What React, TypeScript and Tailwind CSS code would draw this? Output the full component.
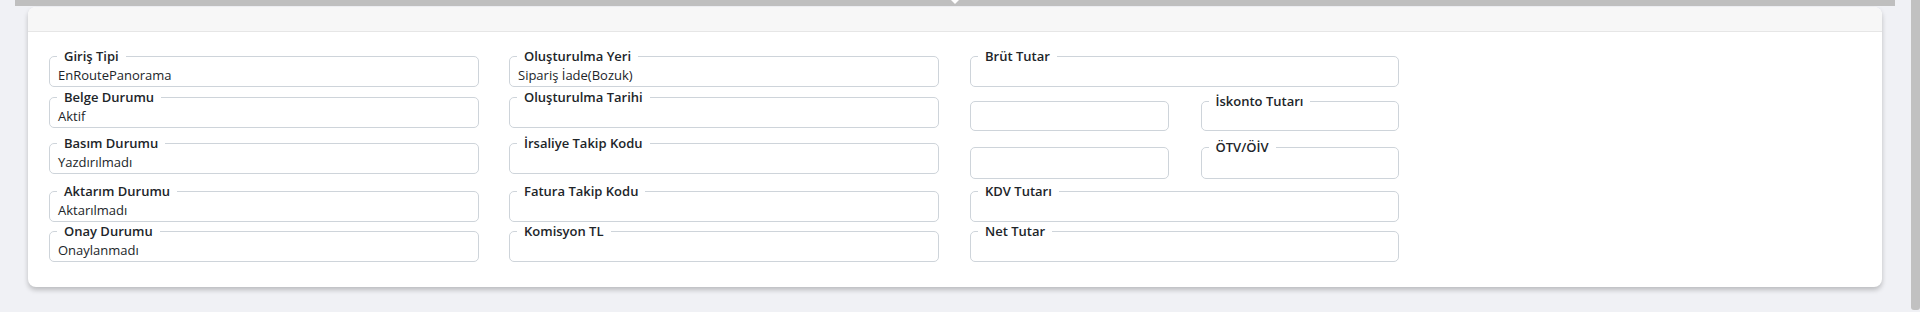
import React from "react";

type FieldProps = {
  label?: string;
  value?: string;
  className?: string;
  contentClass?: string;
};

function Field({ label, value, className = "", contentClass = "h-[22px] leading-[22px]" }: FieldProps) {
  return (
    <fieldset className={`min-w-0 rounded-[5px] border border-[#ced4da] px-2 ${className}`}>
      <legend className="ml-[-1px] px-[7px] text-[13px] font-semibold leading-4 text-[#212529]">{label}</legend>
      <div className={`text-[13px] text-[#212529] ${contentClass}`}>{value}</div>
    </fieldset>
  );
}

export default function App() {
  return (
    <div className="flex h-[312px] w-[1920px] overflow-hidden bg-[#f0f1f5] font-['Open_Sans',sans-serif] text-[#212529]">
      <div className="flex min-w-0 flex-1 flex-col">
        <div className="relative mx-[15px] h-[6px] shrink-0 bg-[#bfbfbf]">
          <svg className="absolute left-[936px] top-0" width="8" height="5" viewBox="0 0 8 5">
            <path d="M0 0 L8 0 L4 4 Z" fill="#ffffff" />
          </svg>
        </div>
        <div className="mx-[28px] mt-[1px] rounded-lg bg-white shadow-[0_3px_5px_rgba(0,0,0,0.22)]">
          <div className="h-[25px] rounded-t-lg border-b border-[#e6e6e6] bg-[#f7f7f7]" />
          <div className="grid grid-cols-[430px_430px_430px] gap-x-[30px] pb-[25px] pl-[21px] pt-[16px]">
            {/* Column 1 */}
            <div className="flex flex-col">
              <Field label="Giriş Tipi" value="EnRoutePanorama" />
              <Field label="Belge Durumu" value="Aktif" className="mt-[2px]" />
              <Field label="Basım Durumu" value="Yazdırılmadı" className="mt-[7px]" />
              <Field label="Aktarım Durumu" value="Aktarılmadı" className="mt-[9px]" />
              <Field label="Onay Durumu" value="Onaylanmadı" className="mt-[1px]" />
            </div>
            {/* Column 2 */}
            <div className="flex flex-col">
              <Field label="Oluşturulma Yeri" value="Sipariş İade(Bozuk)" />
              <Field label="Oluşturulma Tarihi" value="" className="mt-[2px]" />
              <Field label="İrsaliye Takip Kodu" value="" className="mt-[7px]" />
              <Field label="Fatura Takip Kodu" value="" className="mt-[9px]" />
              <Field label="Komisyon TL" value="" className="mt-[1px]" />
            </div>
            {/* Column 3 */}
            <div className="ml-[1px] flex flex-col">
              <Field label="Brüt Tutar" value="" />
              <div className="mt-[6px] grid grid-cols-2 gap-x-[32px]">
                <div className="mt-[8px] h-[30px] rounded-[5px] border border-[#ced4da]" />
                <Field label="İskonto Tutarı" value="" contentClass="h-[21px] leading-[21px]" />
              </div>
              <div className="mt-[8px] grid grid-cols-2 gap-x-[32px]">
                <div className="mt-[8px] h-[32px] rounded-[5px] border border-[#ced4da]" />
                <Field label="ÖTV/ÖİV" value="" contentClass="h-[23px] leading-[23px]" />
              </div>
              <Field label="KDV Tutarı" value="" className="mt-[4px]" />
              <Field label="Net Tutar" value="" className="mt-[1px]" />
            </div>
          </div>
        </div>
      </div>
      <div className="flex w-[10px] shrink-0 flex-col bg-[#f0f1f5]">
        <div className="ml-[1px] h-[310px] rounded-b-[3px] bg-[#c1c1c1]" />
      </div>
    </div>
  );
}
